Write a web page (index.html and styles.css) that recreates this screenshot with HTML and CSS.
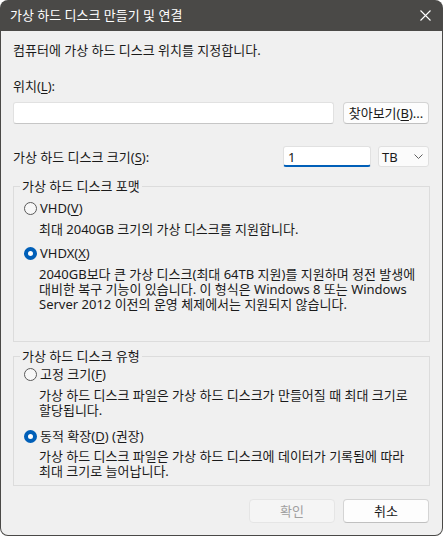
FILE: index.html
```html
<!DOCTYPE html>
<html lang="ko">
<head>
	<meta charset="UTF-8">
	<title>가상 하드 디스크 만들기 및 연결</title>
	<link rel="stylesheet" href="styles.css">
</head>
<body>
	<div class="window">
		<div class="titlebar">
			<span class="title">가상 하드 디스크 만들기 및 연결</span>
			<svg class="close" width="11" height="11" viewBox="0 0 11 11"><path d="M0.5 0.5 L10.5 10.5 M10.5 0.5 L0.5 10.5" stroke="#fff" stroke-width="1.1" fill="none"/></svg>
		</div>
		<div class="content">
			<p class="intro">컴퓨터에 가상 하드 디스크 위치를 지정합니다.</p>
			<p class="field_label">위치(<u>L</u>):</p>
			<div class="loc_row">
				<div class="textbox loc_box"></div>
				<div class="btn browse_btn"><span>찾아보기(<u>B</u>)...</span></div>
			</div>
			<div class="size_row">
				<span>가상 하드 디스크 크기(<u>S</u>):</span>
				<div class="size_ctrls">
					<div class="textbox size_box">1</div>
					<div class="combo">
						<span>TB</span>
						<svg width="9" height="5" viewBox="0 0 9 5"><path d="M0.5 0.5 L4.5 4.5 L8.5 0.5" stroke="#606060" stroke-width="1" fill="none"/></svg>
					</div>
				</div>
			</div>

			<fieldset class="group group_format">
				<legend>가상 하드 디스크 포맷</legend>
				<div class="radio"><span class="circle"></span><span>VHD(<u>V</u>)</span></div>
				<p class="desc">최대 2040GB 크기의 가상 디스크를 지원합니다.</p>
				<div class="radio radio_next"><span class="circle on"></span><span>VHDX(<u>X</u>)</span></div>
				<p class="desc">2040GB보다 큰 가상 디스크(최대 64TB 지원)를 지원하며 정전 발생에<br>대비한 복구 기능이 있습니다. 이 형식은 Windows 8 또는 Windows<br>Server 2012 이전의 운영 체제에서는 지원되지 않습니다.</p>
			</fieldset>

			<fieldset class="group group_type">
				<legend>가상 하드 디스크 유형</legend>
				<div class="radio"><span class="circle"></span><span>고정 크기(<u>F</u>)</span></div>
				<p class="desc">가상 하드 디스크 파일은 가상 하드 디스크가 만들어질 때 최대 크기로<br>할당됩니다.</p>
				<div class="radio radio_next"><span class="circle on"></span><span>동적 확장(<u>D</u>) (권장)</span></div>
				<p class="desc desc_last">가상 하드 디스크 파일은 가상 하드 디스크에 데이터가 기록됨에 따라<br>최대 크기로 늘어납니다.</p>
			</fieldset>

			<div class="actions">
				<div class="btn disabled">확인</div>
				<div class="btn">취소</div>
			</div>
		</div>
	</div>
</body>
</html>
```

FILE: styles.css
```css
*{box-sizing: border-box;}
html,body{margin: 0;padding: 0;background: #fff;}
body{font-family: "Noto Sans","Noto Sans CJK KR",sans-serif;font-size: 13px;line-height: 16px;color: #1a1a1a;}
p{margin: 0;}
u{text-decoration: underline;text-underline-offset: 2px;text-decoration-thickness: 1px;}

.window{width: 443px;height: 536px;background: #4a4947;border-radius: 8px;padding: 0 1px 1px;display: flex;flex-direction: column;overflow: hidden;}
.titlebar{height: 31px;flex: none;display: flex;align-items: center;justify-content: space-between;padding: 0 11px 1px 9px;color: #fff;}
.close{display: block;}
.content{flex: 1;background: #f0f0f0;padding: 11px 12px 0;border-radius: 0 0 7px 7px;}

.field_label{margin-top: 20px;}
.loc_row{margin-top: 8px;display: flex;gap: 9px;height: 22px;}
.textbox{background: #fff;border: 1px solid #e1e1e1;border-bottom-color: #c6c6c6;border-radius: 3px;}
.loc_box{width: 321px;}
.btn{display: flex;align-items: center;justify-content: center;width: 86px;background: #fdfdfd;border: 1px solid #d4d4d4;border-bottom-color: #c0c0c0;border-radius: 4px;}
.size_row{margin-top: 22px;display: flex;align-items: center;justify-content: space-between;padding-right: 1px;}
.size_ctrls{display: flex;gap: 7px;height: 21px;}
.size_box{width: 88px;padding: 2px 4px 0;border-bottom: 2px solid #005fb8;line-height: 16px;}
.combo{width: 51px;display: flex;align-items: center;justify-content: space-between;padding: 0 5px 0 3px;background: #fbfbfb;border: 1px solid #e0e0e0;border-radius: 3px;}

.group{margin: 11px 0 0;padding: 6px 10px 29px;border: 1px solid #dcdcdc;min-width: 0;}
.group legend{padding: 0 2px;margin-left: -4px;line-height: 16px;}
.group_type{margin-top: 6px;padding-top: 2px;padding-bottom: 6px;}
.radio{display: flex;align-items: center;gap: 3px;height: 16px;}
.radio_next{margin-top: 8px;}
.group_type .radio_next{margin-top: 10px;}
.circle{flex: none;width: 13px;height: 13px;border: 1px solid #5a5a5a;border-radius: 50%;background: #f7f7f7;}
.circle.on{border: 4px solid #005fb8;background: #fff;}
.desc{margin: 6px 0 0 15px;line-height: 15px;white-space: nowrap;}
.desc_last{margin-top: 5px;}

.actions{margin-top: 13px;display: flex;justify-content: flex-end;gap: 8px;padding-right: 1px;}
.actions .btn{height: 24px;}
.btn.disabled{background: #f5f5f5;border-color: #e5e5e5;color: #a0a0a0;}
```
